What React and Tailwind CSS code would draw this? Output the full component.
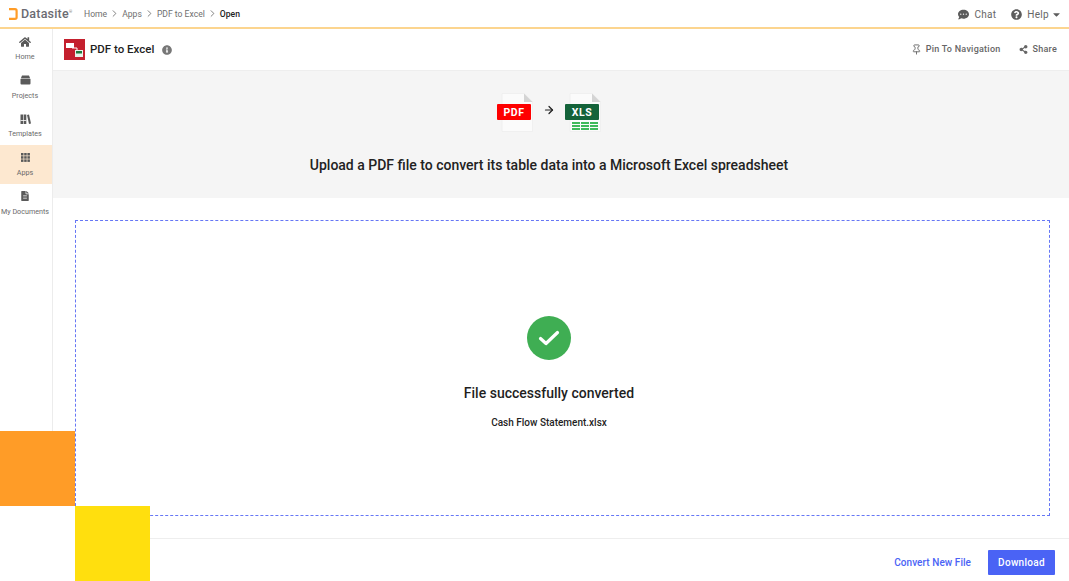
import React from "react";
import { ChevronRight, Pin, ArrowRight } from "lucide-react";
import { FaHome, FaFileAlt, FaCommentDots, FaQuestionCircle, FaCaretDown, FaInfoCircle, FaShareAlt } from "react-icons/fa";

function ProjectsIcon() {
  return (
    <svg width="11" height="10" viewBox="0 0 11 10" fill="currentColor">
      <path d="M2 0.5 H9 L10 3 H1 Z" />
      <rect x="0.5" y="3.5" width="10" height="6" rx="1" />
    </svg>
  );
}

function TemplatesIcon() {
  return (
    <svg width="11" height="10" viewBox="0 0 11 10" fill="currentColor">
      <rect x="0.5" y="0.5" width="2.6" height="9.5" />
      <rect x="3.7" y="0.5" width="2.6" height="9.5" />
      <path d="M7 1 L9 0.4 L11 9.4 L9 10 Z" />
      <rect x="0.5" y="6" width="5.8" height="0.8" fill="#fff" />
    </svg>
  );
}

function AppsIcon() {
  return (
    <svg width="9" height="9" viewBox="0 0 9 9" fill="currentColor">
      {[0, 3.2, 6.4].map((y) =>
        [0, 3.2, 6.4].map((x) => <rect key={`${x}-${y}`} x={x} y={y} width="2.5" height="2.5" />)
      )}
    </svg>
  );
}

function DocIcon() {
  return <FaFileAlt size={10} />;
}

const nav = [
  { label: "Home", Icon: () => <FaHome size={12} /> },
  { label: "Projects", Icon: ProjectsIcon },
  { label: "Templates", Icon: TemplatesIcon },
  { label: "Apps", Icon: AppsIcon, active: true },
  { label: "My Documents", Icon: DocIcon },
];

function FileIcon({ label, color, sheet }) {
  return (
    <svg width="36" height="39" viewBox="0 0 36 39">
      <path d="M5 0.5 H27 L35.5 9 V38.5 H5 Z" fill="#fbfbfb" stroke="#eeeeee" strokeWidth="0.8" />
      <path d="M27 0.5 L35.5 9 H27 Z" fill="#d4d4d4" />
      <rect x="0" y="11" width="34" height="16" rx="1" fill={color} />
      <text x="17" y="23" textAnchor="middle" fill="#fff" fontFamily="Roboto, sans-serif" fontWeight="700" fontSize="10.5" letterSpacing="0.5">
        {label}
      </text>
      {sheet &&
        [29, 32, 35].map((y) => (
          <g key={y} fill="#3fb95a">
            <rect x="7" y={y} width="8" height="2" />
            <rect x="16" y={y} width="8" height="2" />
            <rect x="25" y={y} width="8" height="2" />
          </g>
        ))}
    </svg>
  );
}

function Crumb({ children }) {
  return (
    <>
      <span>{children}</span>
      <ChevronRight size={11} strokeWidth={1.6} className="mx-[2px] text-[#555]" />
    </>
  );
}

export default function App() {
  return (
    <div className="relative flex h-screen flex-col overflow-hidden bg-white font-['Roboto',sans-serif] text-[#1f1f1f]">
      <header className="flex h-[29px] shrink-0 items-center justify-between border-b-2 border-[#fcd58f] pl-[9px] pr-[7px] pt-px">
        <div className="flex items-center">
          <div className="flex items-center">
            <svg width="9" height="12" viewBox="0 0 9 12">
              <path d="M0 1.2 H6 Q7.6 1.2 7.6 2.8 V9.2 Q7.6 10.8 6 10.8 H0" fill="none" stroke="#ff9c27" strokeWidth="2.2" />
            </svg>
            <span className="ml-[3px] text-[12.5px] font-medium tracking-[0.2px] text-[#6b6b72]">Datasite</span>
            <span className="mb-1 text-[4px] text-[#777]">®</span>
          </div>
          <nav className="ml-[12px] flex items-center text-[8.6px] text-[#6f6f6f]">
            <Crumb>Home</Crumb>
            <Crumb>Apps</Crumb>
            <Crumb>PDF to Excel</Crumb>
            <span className="font-medium text-[#222]">Open</span>
          </nav>
        </div>
        <div className="flex items-center text-[10px] tracking-[0.3px] text-[#666]">
          <FaCommentDots size={11} className="mr-[5px] text-[#5c5c5c]" />
          <span>Chat</span>
          <FaQuestionCircle size={11} className="ml-[15px] mr-[5px] text-[#5c5c5c]" />
          <span>Help</span>
          <FaCaretDown size={11} className="ml-[2px] text-[#5c5c5c]" />
        </div>
      </header>

      <div className="flex min-h-0 flex-1">
        <aside className="w-[53px] shrink-0 border-r border-[#ececec]">
          {nav.map(({ label, Icon, active }) => (
            <div
              key={label}
              className={`flex h-[38.7px] flex-col items-center pr-[2px] pt-[6px] ${active ? "bg-[#fde8d0]" : ""}`}
            >
              <div className="flex h-[13px] items-center text-[#5a5a5a]">
                <Icon />
              </div>
              <span className="mt-[3px] whitespace-nowrap text-[7.2px] leading-[11px] text-[#6a6a6a]">{label}</span>
            </div>
          ))}
        </aside>

        <main className="flex min-w-0 flex-1 flex-col">
          <div className="flex h-[42px] shrink-0 items-center justify-between border-b border-[#eeeeee] pl-[11px] pr-[12px]">
            <div className="flex items-center">
              <svg width="21" height="21" viewBox="0 0 21 21">
                <rect width="21" height="21" fill="#c4202e" />
                <rect x="2" y="4" width="8" height="5" fill="#fff" />
                <rect x="11" y="11" width="8" height="7" fill="#e8f3ea" />
                <rect x="12" y="12" width="6" height="2.5" fill="#1f7a3e" />
                <path d="M8 9 H13 V11" fill="none" stroke="#fff" strokeWidth="1" />
              </svg>
              <span className="ml-[5px] text-[11.5px] font-medium">PDF to Excel</span>
              <FaInfoCircle size={10} className="ml-[8px] text-[#777]" />
            </div>
            <div className="flex items-center text-[9px] font-medium tracking-[0.25px] text-[#666]">
              <Pin size={11} className="mr-[4px]" />
              <span>Pin To Navigation</span>
              <FaShareAlt size={9} className="ml-[18px] mr-[5px]" />
              <span>Share</span>
            </div>
          </div>

          <section className="flex h-[127px] shrink-0 flex-col items-center bg-[#f5f5f5] pr-[24px] pt-[22px]">
            <div className="flex items-center">
              <FileIcon label="PDF" color="#fe0000" />
              <ArrowRight size={12} strokeWidth={2.4} className="mx-[10px] mb-[5px]" />
              <FileIcon label="XLS" color="#14633a" sheet />
            </div>
            <h1 className="mt-[23px] text-[14px] font-medium leading-[20px] text-[#222]">
              Upload a PDF file to convert its table data into a Microsoft Excel spreadsheet
            </h1>
          </section>

          <section className="flex min-h-0 flex-1 flex-col pl-[22px] pr-[19px] pt-[22px]">
            <div className="flex h-[296px] flex-col items-center border border-dashed border-[#6677f5] pr-[27px] pt-[95px]">
              <div className="flex h-[44px] w-[44px] items-center justify-center rounded-full bg-[#3fae53]">
                <svg width="22" height="16" viewBox="0 0 22 16">
                  <path d="M2.5 8.5 L8 13.5 L19.5 2.5" fill="none" stroke="#fff" strokeWidth="3.2" strokeLinecap="round" strokeLinejoin="round" />
                </svg>
              </div>
              <h2 className="mt-[23px] text-[14px] font-medium leading-[20px]">File successfully converted</h2>
              <p className="mt-[13px] text-[10px] font-medium leading-[14px]">Cash Flow Statement.xlsx</p>
            </div>
          </section>

          <footer className="flex h-[43px] shrink-0 items-start justify-end border-t border-[#eeeeee] pr-[14px] pt-[11px]">
            <span className="mt-[6px] text-[10px] font-medium leading-[14px] tracking-[0.05px] text-[#4a63f5]">Convert New File</span>
            <button className="ml-[17px] h-[25px] w-[67px] rounded-[1px] bg-[#4a63f5] text-[10px] font-medium tracking-[0.3px] text-white">Download</button>
          </footer>
        </main>
      </div>

      <div className="absolute left-0 top-[431px] h-[75px] w-[75px] bg-[#ff9c27]" />
      <div className="absolute left-0 top-[506px] h-[75px] w-[75px] bg-white" />
      <div className="absolute left-[75px] top-[506px] h-[75px] w-[75px] bg-[#ffdf0e]" />
    </div>
  );
}
